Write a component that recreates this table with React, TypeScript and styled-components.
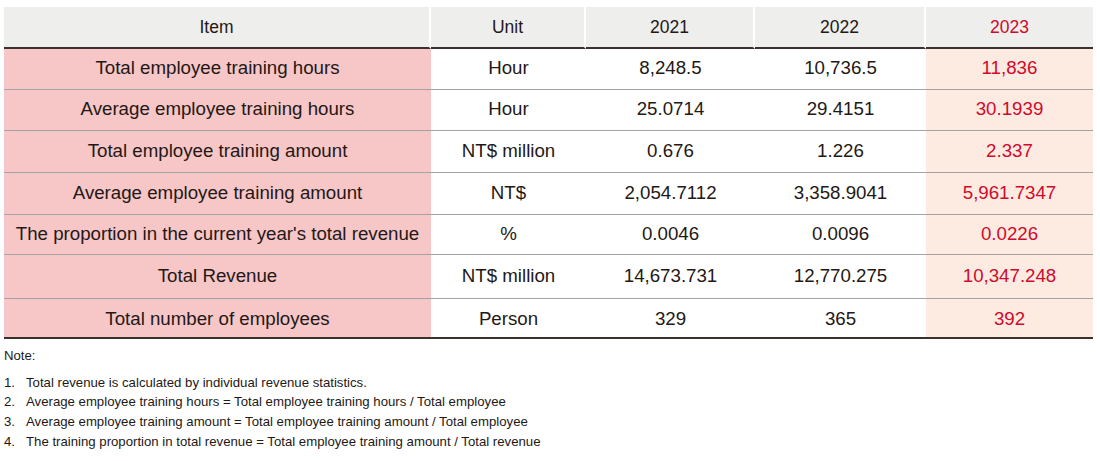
import React from "react";
import styled, { createGlobalStyle } from "styled-components";

const Global = createGlobalStyle`
  html, body { margin: 0; padding: 0; background: #ffffff; }
  body { font-family: "Liberation Sans", Arial, sans-serif; color: #231815; }
`;

const Page = styled.div`
  padding: 7px 7px 0 4px;
`;

const Table = styled.div`
  display: grid;
  grid-template-columns: 427px 155px 169px 171px 167px;
  grid-template-rows: 42px 41px 41px 42px 42px 40px 44px 40px;
  width: 1089px;
`;

const HeadCell = styled.div<{ $accent?: boolean; $last?: boolean }>`
  box-sizing: border-box;
  background: #eeeeed;
  border-bottom: 2px solid #3a302d;
  border-right: ${(p) => (p.$last ? "0" : "2px solid #ffffff")};
  display: flex;
  align-items: center;
  justify-content: center;
  font-size: 17.5px;
  color: ${(p) => (p.$accent ? "#cf0a2c" : "#231815")};
`;

const Cell = styled.div<{ $kind: "item" | "plain" | "accent"; $last?: boolean }>`
  box-sizing: border-box;
  display: flex;
  align-items: center;
  justify-content: center;
  padding: ${(p) => (p.$last ? "2px 0 0" : "0 0 2px")};
  font-size: 18.7px;
  white-space: nowrap;
  border-bottom: ${(p) => (p.$last ? "2px solid #3a302d" : "1px solid #a4a2a2")};
  background: ${(p) =>
    p.$kind === "item" ? "#f7c6c7" : p.$kind === "accent" ? "#fdebe1" : "#ffffff"};
  color: ${(p) => (p.$kind === "accent" ? "#cf0a2c" : "#231815")};
`;

const Notes = styled.div`
  margin-top: 7px;
  font-size: 13.2px;
  line-height: 19.7px;
  color: #231815;
`;

const NoteTitle = styled.div`
  margin-bottom: 7px;
`;

const NoteList = styled.ol`
  margin: 0;
  padding: 0;
  list-style: none;
`;

const NoteItem = styled.li`
  display: flex;
`;

const NoteNum = styled.span`
  width: 22px;
  flex: none;
`;

const rows = [
  ["Total employee training hours", "Hour", "8,248.5", "10,736.5", "11,836"],
  ["Average employee training hours", "Hour", "25.0714", "29.4151", "30.1939"],
  ["Total employee training amount", "NT$ million", "0.676", "1.226", "2.337"],
  ["Average employee training amount", "NT$", "2,054.7112", "3,358.9041", "5,961.7347"],
  ["The proportion in the current year's total revenue", "%", "0.0046", "0.0096", "0.0226"],
  ["Total Revenue", "NT$ million", "14,673.731", "12,770.275", "10,347.248"],
  ["Total number of employees", "Person", "329", "365", "392"],
];

const notes = [
  "Total revenue is calculated by individual revenue statistics.",
  "Average employee training hours = Total employee training hours / Total employee",
  "Average employee training amount = Total employee training amount / Total employee",
  "The training proportion in total revenue = Total employee training amount / Total revenue",
];

export default function App() {
  const headers = ["Item", "Unit", "2021", "2022", "2023"];
  return (
    <Page>
      <Global />
      <Table>
        {headers.map((h, i) => (
          <HeadCell key={h} $accent={i === 4} $last={i === 4}>
            {h}
          </HeadCell>
        ))}
        {rows.map((r, ri) =>
          r.map((v, ci) => (
            <Cell
              key={`${ri}-${ci}`}
              $kind={ci === 0 ? "item" : ci === 4 ? "accent" : "plain"}
              $last={ri === rows.length - 1}
            >
              {v}
            </Cell>
          ))
        )}
      </Table>
      <Notes>
        <NoteTitle>Note:</NoteTitle>
        <NoteList>
          {notes.map((n, i) => (
            <NoteItem key={i}>
              <NoteNum>{i + 1}.</NoteNum>
              <span>{n}</span>
            </NoteItem>
          ))}
        </NoteList>
      </Notes>
    </Page>
  );
}
